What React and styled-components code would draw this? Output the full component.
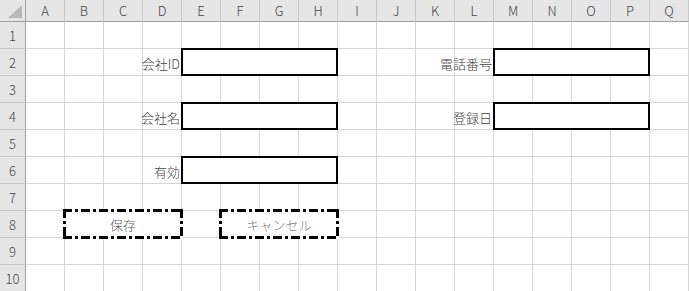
import React from 'react'
import styled, { createGlobalStyle } from 'styled-components'

const Global = createGlobalStyle`
  html, body { margin: 0; padding: 0; background: #fff; }
  body { font-family: "Noto Sans CJK JP", "Noto Sans", sans-serif; }
`

const COLS = 'ABCDEFGHIJKLMNOPQ'.split('')
const ROWS = [1, 2, 3, 4, 5, 6, 7, 8, 9, 10]

const Sheet = styled.div`
  display: grid;
  grid-template-columns: 26px repeat(17, 39px);
  grid-template-rows: 22px repeat(10, 27px);
  width: 689px;
  height: 291px;
  overflow: hidden;
  font-size: 13px;
  font-weight: 300;
`

const Corner = styled.div`
  grid-row: 1;
  grid-column: 1;
  position: relative;
  background: #e6e6e6;
  border-right: 1px solid #9f9f9f;
  border-bottom: 1px solid #9f9f9f;
  box-sizing: border-box;
  &::after {
    content: '';
    position: absolute;
    left: 8px;
    top: 5px;
    width: 14px;
    height: 13px;
    background: #b9b9b9;
    clip-path: polygon(100% 0, 100% 100%, 0 100%);
  }
`

const ColHead = styled.div`
  grid-row: 1;
  grid-column: ${p => p.$c};
  background: #e6e6e6;
  border-right: 1px solid #c8c8c8;
  border-bottom: 1px solid #9f9f9f;
  box-sizing: border-box;
  display: flex;
  align-items: center;
  justify-content: center;
  color: #444;
  line-height: 1;
`

const RowHead = styled.div`
  grid-row: ${p => p.$r};
  grid-column: 1;
  background: #e6e6e6;
  border-right: 1px solid #9f9f9f;
  border-bottom: 1px solid #c8c8c8;
  box-sizing: border-box;
  display: flex;
  align-items: center;
  justify-content: center;
  color: #444;
  line-height: 1;
`

const Cell = styled.div`
  grid-row: ${p => p.$r};
  grid-column: ${p => p.$c};
  border-right: 1px solid #d6d6d6;
  border-bottom: 1px solid #d6d6d6;
  box-sizing: border-box;
`

const Label = styled.div`
  grid-row: ${p => p.$r};
  grid-column: ${p => p.$c};
  display: flex;
  align-items: center;
  justify-content: flex-end;
  padding: 1px 2px 0 0;
  color: #444;
  white-space: nowrap;
  line-height: 1;
`

const Field = styled.div`
  grid-row: ${p => p.$r};
  grid-column: ${p => p.$c};
  margin: -1px 0 0 -1px;
  border: 2px solid #000;
  background: #fff;
`

const dashH = 'repeating-linear-gradient(90deg, #000 0 9px, transparent 9px 12px, #000 12px 15px, transparent 15px 18px)'
const dashV = 'repeating-linear-gradient(180deg, #000 0 9px, transparent 9px 12px, #000 12px 15px, transparent 15px 18px)'

const Button = styled.div`
  grid-row: 9;
  grid-column: ${p => p.$c};
  margin: -2px -1px -1px -2px;
  background:
    ${dashH} left top / 100% 3px no-repeat,
    ${dashH} left bottom / 100% 3px no-repeat,
    ${dashV} left top / 3px 100% no-repeat,
    ${dashV} right top / 3px 100% no-repeat,
    #fff;
  display: flex;
  align-items: center;
  justify-content: center;
  color: ${p => p.$color};
  line-height: 1;
`

export default function App () {
  return (
    <>
      <Global />
      <Sheet>
        <Corner />
        {COLS.map((c, i) => (
          <ColHead key={c} $c={i + 2}>{c}</ColHead>
        ))}
        {ROWS.map(r => (
          <React.Fragment key={r}>
            <RowHead $r={r + 1}>{r}</RowHead>
            {COLS.map((c, i) => (
              <Cell key={c} $r={r + 1} $c={i + 2} />
            ))}
          </React.Fragment>
        ))}

        <Label $r={3} $c="3 / 6">会社ID</Label>
        <Field $r={3} $c="6 / 10" />
        <Label $r={5} $c="3 / 6">会社名</Label>
        <Field $r={5} $c="6 / 10" />
        <Label $r={7} $c="3 / 6">有効</Label>
        <Field $r={7} $c="6 / 10" />

        <Label $r={3} $c="11 / 14">電話番号</Label>
        <Field $r={3} $c="14 / 18" />
        <Label $r={5} $c="11 / 14">登録日</Label>
        <Field $r={5} $c="14 / 18" />

        <Button $c="3 / 6" $color="#595959">保存</Button>
        <Button $c="7 / 10" $color="#7f7f7f">キャンセル</Button>
      </Sheet>
    </>
  )
}
